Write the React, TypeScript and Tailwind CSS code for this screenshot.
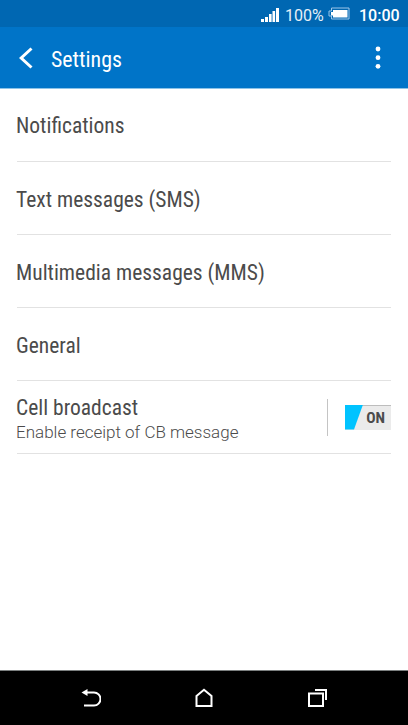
import React from 'react';

interface SettingsRowProps {
    title: string;
    desc?: string;
    children?: React.ReactNode;
}

const rows = [
    { title: 'Notifications' },
    { title: 'Text messages (SMS)' },
    { title: 'Multimedia messages (MMS)' },
    { title: 'General' },
];

const StatusBar = () => (
    <div className="flex h-[27px] items-center justify-end bg-[#0067b2] pr-[9px] font-['Roboto',sans-serif] text-[16px] text-white">
        <svg width="18" height="14" viewBox="0 0 18 14" fill="currentColor" className="mt-[2px] mr-[6px]">
            <rect x="0" y="11" width="3" height="3" />
            <rect x="4" y="9" width="3" height="5" />
            <rect x="8" y="6" width="2.6" height="8" />
            <rect x="11.5" y="3" width="2.6" height="11" />
            <rect x="15" y="0" width="3" height="14" />
        </svg>
        <span className="mt-[3px] w-[39px] leading-[27px] opacity-90">100%</span>
        <svg width="22" height="13" viewBox="0 0 22 13" fill="none" className="ml-[4px] mr-[9px]">
            <path d="M3.5 1H21v11H3.5V9H1V4h2.500z" stroke="#9cc6e8" strokeWidth="1" />
            <path d="M5 3h14.500v7.500H5V8.500H3V5h2z" fill="white" />
        </svg>
        <span className="mt-[3px] w-[40px] font-medium leading-[27px]">10:00</span>
    </div>
);

const Header = () => (
    <header className="flex h-[62px] items-center border-b border-[#8cc3e8] bg-[#0074c8] pl-[19px] pr-[27px] text-white">
        <svg width="14" height="22" viewBox="0 0 14 22" fill="none" stroke="currentColor" strokeWidth="3">
            <path d="M12.500 1.500L2.200 11L12.500 20.500" />
        </svg>
        <h1 className="ml-[18px] mt-[5px] flex-1 text-[21.9px] font-normal [font-stretch:75%]">Settings</h1>
        <svg width="6" height="24" viewBox="0 0 6 24" fill="currentColor">
            <circle cx="3" cy="3" r="2.4" />
            <circle cx="3" cy="11.7" r="2.4" />
            <circle cx="3" cy="20.3" r="2.4" />
        </svg>
    </header>
);

const SettingsRow: React.FC<SettingsRowProps> = ({ title, desc, children }) => (
    <li className="group flex h-[73px] items-center border-b border-[#e2e2e2]">
        <div className="-ml-px flex-1 pt-[4px] group-first:pt-[2px]">
            <p className="text-[21.5px] leading-[28px] text-[#4b4b4b] [font-stretch:75%]">{title}</p>
            {desc && <p className="-mt-px font-['Roboto',sans-serif] text-[17px] font-light leading-[23px] text-[#4b4b4b]">{desc}</p>}
        </div>
        {children}
    </li>
);

const Toggle = () => (
    <div className="flex h-[37px] items-center border-l border-[#c4c4c4] pl-[17px]">
        <div className="relative flex h-[25px] w-[46px] items-center justify-end border-t border-[#bdbdbd] bg-[#ebebeb] pr-[6px]">
            <div className="absolute -top-px bottom-0 left-0 w-[18px] bg-[#00c3ff] [clip-path:polygon(0_0,100%_0,50%_100%,0_100%)]" />
            <span className="pt-[2px] text-[15.5px] font-bold text-[#4b4b4b] [font-stretch:75%]">ON</span>
        </div>
    </div>
);

const NavBar = () => (
    <nav className="flex h-[55px] items-center justify-between border-t border-[#7b7f7f] bg-black px-[81px] text-white">
        <svg width="20" height="20" viewBox="0 0 20 20" fill="none" stroke="currentColor" strokeWidth="2">
            <path d="M4 4.500h9a6 6 0 0 1 0 13H3" />
            <path d="M0.500 4.500L6.500 1v7z" fill="currentColor" stroke="none" />
        </svg>
        <svg width="18" height="20" viewBox="0 0 18 20" fill="none" stroke="currentColor" strokeWidth="2">
            <path d="M1.500 8L9 1.800L16.500 8v10h-15z" />
        </svg>
        <svg width="20" height="20" viewBox="0 0 20 20" fill="none" stroke="currentColor" strokeWidth="2">
            <path d="M2 5.500h14v12.500H2z" />
            <path d="M8 2h11v10" />
        </svg>
    </nav>
);

const App = () => {
    return (
        <div className="flex h-screen flex-col overflow-hidden bg-white font-['Roboto_Condensed','Roboto',sans-serif]">
            <StatusBar />
            <Header />
            <ul className="flex-1 px-[17px]">
                {rows.map((row) => (
                    <SettingsRow key={row.title} title={row.title} />
                ))}
                <SettingsRow title="Cell broadcast" desc="Enable receipt of CB message">
                    <Toggle />
                </SettingsRow>
            </ul>
            <NavBar />
        </div>
    );
};

export default App;
